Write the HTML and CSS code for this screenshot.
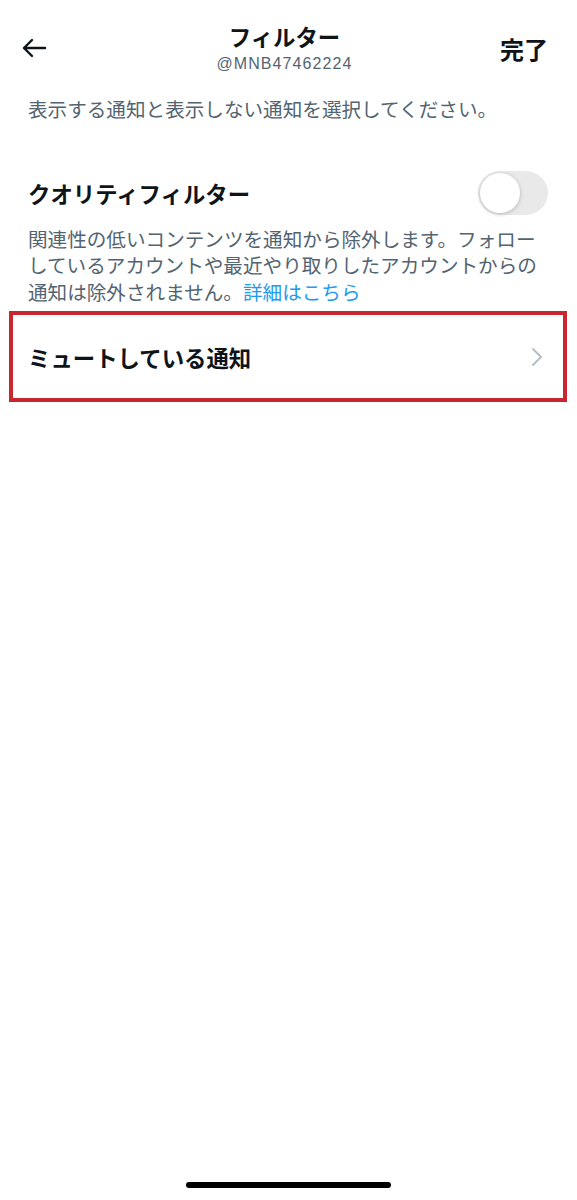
FILE: index.html
```html
<!DOCTYPE html>
<html lang="ja">
<head>
    <meta charset="UTF-8">
    <meta name="viewport" content="width=device-width, initial-scale=1.0">
    <title>フィルター</title>
    <link rel="stylesheet" href="styles.css">
</head>
<body>

<div class="screen">
    <header class="header">
        <button class="back" type="button" aria-label="戻る">
            <svg width="26" height="22" viewBox="0 0 26 22">
                <path d="M24 11H3M11 3L3 11L11 19" fill="none" stroke="#0f1419" stroke-width="2.4" stroke-linecap="round" stroke-linejoin="round"/>
            </svg>
        </button>
        <div class="title-block">
            <h1 class="title">フィルター</h1>
            <div class="handle">@MNB47462224</div>
        </div>
        <button class="done" type="button">完了</button>
    </header>

    <p class="intro">表示する通知と表示しない通知を選択してください。</p>

    <div class="setting-row">
        <span class="setting-title">クオリティフィルター</span>
        <span class="toggle"><span class="knob"></span></span>
    </div>
    <p class="setting-desc">関連性の低いコンテンツを通知から除外します。フォローしているアカウントや最近やり取りしたアカウントからの通知は除外されません。<a class="link" href="#">詳細はこちら</a></p>

    <div class="menu-item highlight">
        <span class="setting-title">ミュートしている通知</span>
        <svg class="chevron" width="12" height="20" viewBox="0 0 12 20">
            <path d="M2 2L10 10L2 18" fill="none" stroke="#b3bcc5" stroke-width="1.8" stroke-linecap="round" stroke-linejoin="round"/>
        </svg>
    </div>

    <div class="home-indicator"></div>
</div>

</body>
</html>
```

FILE: styles.css
```css
/* Global */
body {
    margin: 0;
    background: #fff;
    color: #0f1419;
    font-family: "Noto Sans CJK JP", "Noto Sans", sans-serif;
}

.screen {
    display: flex;
    flex-direction: column;
    min-height: 1200px;
}

/* Header */
.header {
    display: grid;
    grid-template-columns: 1fr auto 1fr;
    align-items: center;
    padding: 20px 29px 0 21px;
}

.back {
    justify-self: start;
    display: flex;
    padding: 0;
    border: none;
    background: none;
}

.title-block {
    text-align: center;
}

.title {
    margin: 0;
    font-size: 22.4px;
    font-weight: 700;
    line-height: 32px;
}

.handle {
    font-family: "Liberation Sans", Arial, sans-serif;
    font-size: 16px;
    letter-spacing: 1.1px;
    line-height: 24px;
    color: #536471;
}

.done {
    justify-self: end;
    padding: 0;
    border: none;
    background: none;
    font-family: inherit;
    font-size: 24px;
    font-weight: 700;
    color: #0f1419;
}

/* Text */
.intro, .setting-desc {
    margin: 0;
    padding: 0 30px 0 28px;
    font-size: 19.6px;
    line-height: 26.5px;
    color: #536471;
}

.intro {
    margin-top: 20px;
}

.setting-desc {
    margin-top: 11px;
}

.link {
    display: inline-block;
    color: #1d9bf0;
    text-decoration: none;
}

/* Rows */
.setting-row {
    display: flex;
    justify-content: space-between;
    align-items: center;
    margin-top: 48px;
    padding: 0 29px 0 28px;
}

.setting-title {
    font-size: 22.4px;
    font-weight: 700;
    line-height: 30px;
}

.toggle {
    display: flex;
    align-items: center;
    width: 70px;
    height: 44px;
    padding: 0 2px;
    box-sizing: border-box;
    border-radius: 22px;
    background: #e9e9ea;
}

.knob {
    width: 40px;
    height: 40px;
    border-radius: 50%;
    background: #fff;
    box-shadow: 0 1px 4px rgba(0, 0, 0, 0.22);
}

.menu-item {
    display: flex;
    justify-content: space-between;
    align-items: center;
    height: 83px;
    padding: 0 20px 0 15px;
}

.highlight {
    margin: 6px 10px 0 9px;
    border: 4px solid #c9262f;
}

/* Home indicator */
.home-indicator {
    align-self: center;
    width: 205px;
    height: 6px;
    margin-top: auto;
    margin-bottom: 12px;
    border-radius: 3px;
    background: #000;
}
```
